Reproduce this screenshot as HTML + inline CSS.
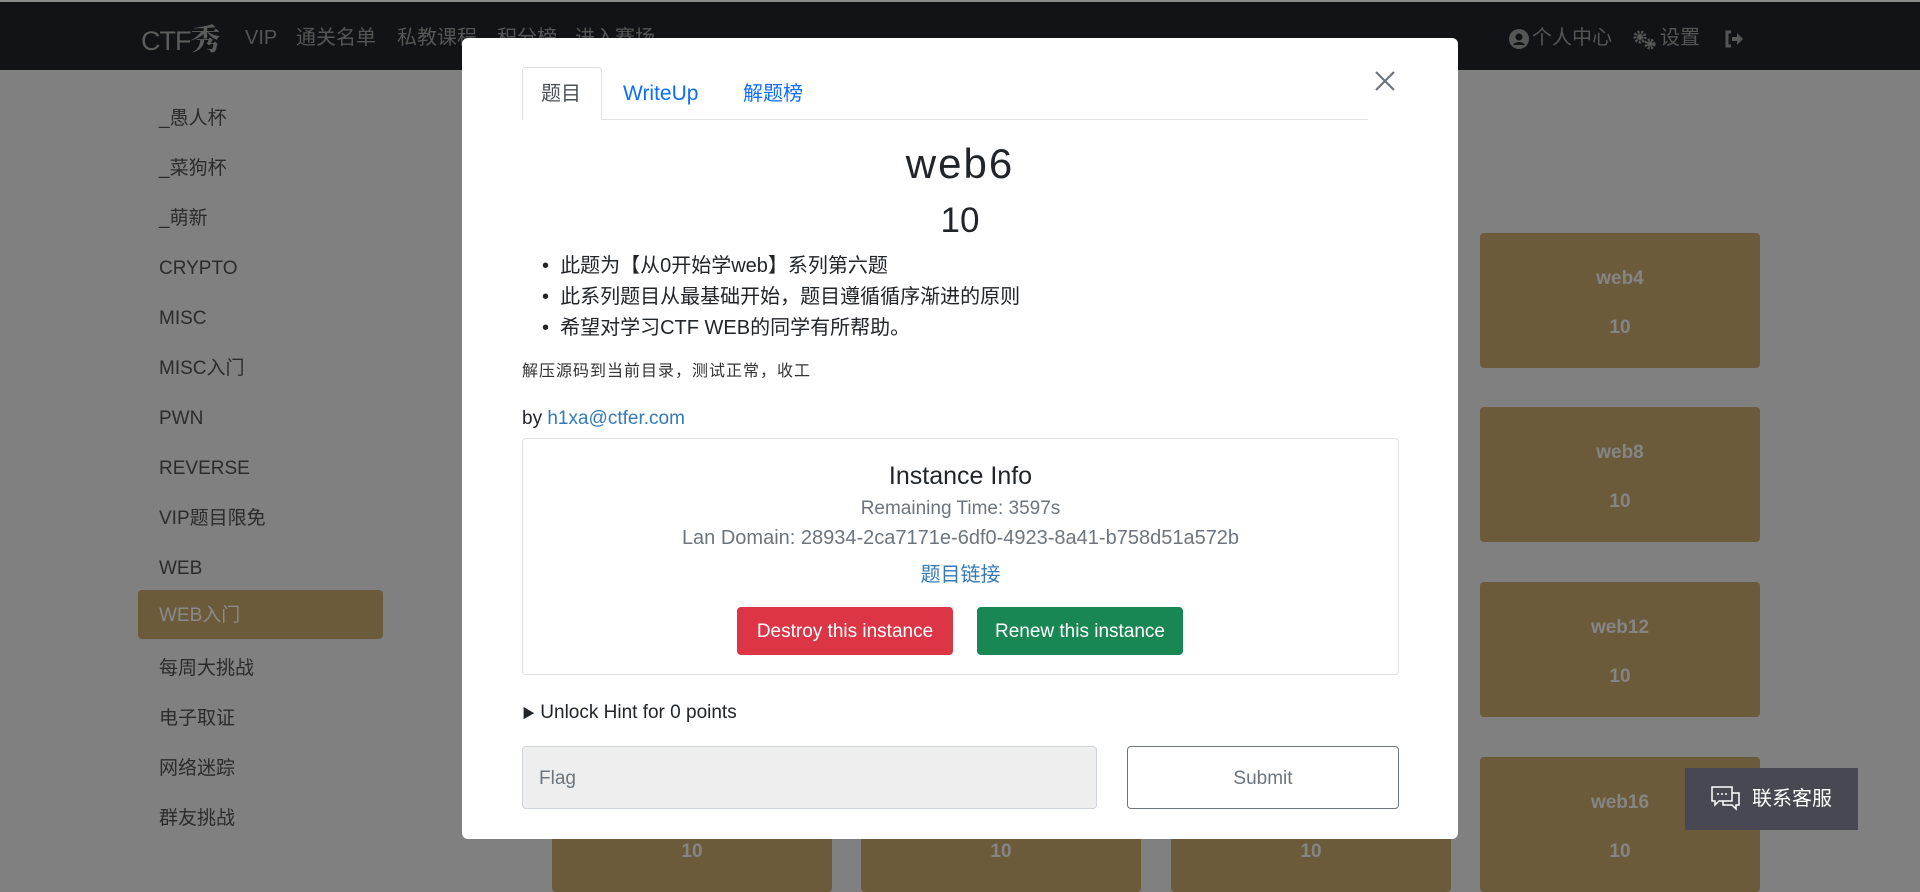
<!DOCTYPE html>
<html><head><meta charset="utf-8">
<style>
*{margin:0;padding:0;box-sizing:border-box}
body{width:1920px;height:892px;overflow:hidden;background:#808080;font-family:"Liberation Sans","Noto Sans CJK SC",sans-serif;position:relative;color:#212529;line-height:1.2}
.a{position:absolute;white-space:nowrap}
.nav{position:absolute;left:0;top:0;width:1920px;height:70px;background:#121316;border-top:2px solid #8a8a8a}
.nv{position:absolute;top:24px;font-size:20px;line-height:24px;color:#565656}
.sb{position:absolute;left:159px;font-size:19px;line-height:24px;color:#2b2b2b}
.tile{position:absolute;width:280px;height:135px;background:#6b5b3a;border-radius:4px;color:#858585;font-weight:bold;font-size:19px;line-height:24px;text-align:center}
.tile .n{position:absolute;top:34px;width:100%}
.tile .p{position:absolute;top:83px;width:100%}
.modal{position:absolute;left:462px;top:38px;width:996px;height:801px;background:#fff;border-radius:6px}
.c{text-align:center;width:100%;left:0}
</style></head><body>
<div class="nav">
 <div class="a" style="left:141px;top:19px;font-size:27px;line-height:32px;color:#5c5c5c;letter-spacing:-1px">CTF<span style="font-family:'Noto Serif CJK SC',serif;font-size:30px;font-weight:bold">秀</span></div>
 <div class="nv" style="left:245px">VIP</div>
 <div class="nv" style="left:296px">通关名单</div>
 <div class="nv" style="left:397px">私教课程</div>
 <div class="nv" style="left:497px">积分榜</div>
 <div class="nv" style="left:575px">进入赛场</div>
 <svg class="a" style="left:1509px;top:27px" width="20" height="20" viewBox="0 0 20 20"><circle cx="10" cy="10" r="10" fill="#565656"/><circle cx="10" cy="8" r="3.5" fill="#121316"/><path d="M4 16c2-4 10-4 12 0" fill="#121316"/></svg>
 <div class="nv" style="left:1532px">个人中心</div>
 <svg class="a" style="left:1633px;top:28px" width="24" height="20" viewBox="0 0 24 20"><circle cx="7" cy="7" r="5" fill="none" stroke="#565656" stroke-width="3" stroke-dasharray="2 1.5"/><circle cx="7" cy="7" r="3" fill="#565656"/><circle cx="17" cy="14" r="4" fill="none" stroke="#565656" stroke-width="3" stroke-dasharray="2 1.3"/><circle cx="17" cy="14" r="2.5" fill="#565656"/></svg>
 <div class="nv" style="left:1660px">设置</div>
 <svg class="a" style="left:1724px;top:28px" width="20" height="18" viewBox="0 0 20 18"><path d="M7 2H3v14h4" stroke="#565656" stroke-width="3" fill="none"/><path d="M8 7h5V3l6 6-6 6v-4H8z" fill="#565656"/></svg>
</div>
<div class="sb" style="top:107px">_愚人杯</div>
<div class="sb" style="top:157px">_菜狗杯</div>
<div class="sb" style="top:207px">_萌新</div>
<div class="sb" style="top:257px">CRYPTO</div>
<div class="sb" style="top:307px">MISC</div>
<div class="sb" style="top:357px">MISC入门</div>
<div class="sb" style="top:407px">PWN</div>
<div class="sb" style="top:457px">REVERSE</div>
<div class="sb" style="top:507px">VIP题目限免</div>
<div class="sb" style="top:557px">WEB</div>
<div class="a" style="left:138px;top:590px;width:245px;height:49px;background:#6b5b3a;border-radius:4px"></div>
<div class="sb" style="top:604px;color:#8a8a8a">WEB入门</div>
<div class="sb" style="top:657px">每周大挑战</div>
<div class="sb" style="top:707px">电子取证</div>
<div class="sb" style="top:757px">网络迷踪</div>
<div class="sb" style="top:807px">群友挑战</div>

<div class="tile" style="left:1480px;top:233px"><div class="n">web4</div><div class="p">10</div></div>
<div class="tile" style="left:1480px;top:407px"><div class="n">web8</div><div class="p">10</div></div>
<div class="tile" style="left:1480px;top:582px"><div class="n">web12</div><div class="p">10</div></div>
<div class="tile" style="left:1480px;top:757px"><div class="n">web16</div><div class="p">10</div></div>
<div class="tile" style="left:552px;top:757px"><div class="p">10</div></div>
<div class="tile" style="left:861px;top:757px"><div class="p">10</div></div>
<div class="tile" style="left:1171px;top:757px"><div class="p">10</div></div>

<div class="a" style="left:1685px;top:768px;width:173px;height:62px;background:#484853;color:#fff;font-size:20px;line-height:24px">
 <svg class="a" style="left:26px;top:18px" width="30" height="26" viewBox="0 0 30 26"><path d="M1 1h20v14H8l-4 4v-4H1z" fill="none" stroke="#fff" stroke-width="1.5"/><path d="M21 7h7v12h-3v4l-4-4h-9v-4" fill="none" stroke="#fff" stroke-width="1.5"/><circle cx="7" cy="8" r="1" fill="#fff"/><circle cx="11" cy="8" r="1" fill="#fff"/><circle cx="15" cy="8" r="1" fill="#fff"/></svg>
 <div class="a" style="left:67px;top:19px">联系客服</div>
</div>

<div class="modal">
 <div class="a" style="left:60px;top:81px;width:846px;border-top:1px solid #dee2e6"></div>
 <div class="a" style="left:60px;top:29px;width:80px;height:53px;background:#fff;border:1px solid #dee2e6;border-bottom:none;border-radius:4px 4px 0 0"></div>
 <div class="a" style="left:79px;top:43px;font-size:20px;line-height:26px;color:#495057">题目</div>
 <div class="a" style="left:161px;top:43px;font-size:21px;line-height:26px;color:#0d6efd">WriteUp</div>
 <div class="a" style="left:281px;top:43px;font-size:20px;line-height:26px;color:#0d6efd">解题榜</div>
 <svg class="a" style="left:912px;top:32px" width="22" height="22" viewBox="0 0 22 22"><path d="M2 2l18 18M20 2L2 20" stroke="#6c757d" stroke-width="2.2"/></svg>
 <div class="a c" style="top:101px;font-size:42px;line-height:50px;letter-spacing:2px">web6</div>
 <div class="a c" style="top:163px;font-size:35px;line-height:40px">10</div>
 <div class="a" style="left:80px;top:213px;font-size:20px;line-height:31px">
  <div>•&nbsp;&nbsp;此题为【从0开始学web】系列第六题</div>
  <div>•&nbsp;&nbsp;此系列题目从最基础开始，题目遵循循序渐进的原则</div>
  <div>•&nbsp;&nbsp;希望对学习CTF WEB的同学有所帮助。</div>
 </div>
 <div class="a" style="left:60px;top:324px;font-size:16px;line-height:20px;color:#333;letter-spacing:1px">解压源码到当前目录，测试正常，收工</div>
 <div class="a" style="left:60px;top:369px;font-size:19px;line-height:24px">by <span style="color:#337ab7">h1xa@ctfer.com</span></div>
 <div class="a" style="left:60px;top:400px;width:877px;height:237px;border:1px solid #dee2e6;border-radius:4px">
  <div class="a c" style="top:22px;font-size:25px;line-height:30px">Instance Info</div>
  <div class="a c" style="top:58px;font-size:19px;line-height:24px;color:#6c757d">Remaining Time: 3597s</div>
  <div class="a c" style="top:87px;font-size:20px;line-height:24px;color:#6c757d">Lan Domain: 28934-2ca7171e-6df0-4923-8a41-b758d51a572b</div>
  <div class="a c" style="top:123px;font-size:20px;line-height:26px;color:#337ab7">题目链接</div>
  <div class="a" style="left:214px;top:168px;width:216px;height:48px;background:#dc3545;border-radius:4px;color:#fff;font-size:19px;text-align:center;line-height:50px">Destroy this instance</div>
  <div class="a" style="left:454px;top:168px;width:206px;height:48px;background:#198754;border-radius:4px;color:#fff;font-size:19px;text-align:center;line-height:50px">Renew this instance</div>
 </div>
 <div class="a" style="left:60px;top:663px;font-size:19px;line-height:24px"><span style="font-size:13px">▶</span> Unlock Hint for 0 points</div>
 <div class="a" style="left:60px;top:708px;width:575px;height:63px;background:#eee;border:1px solid #ced4da;border-radius:4px;font-size:19px;line-height:63px;color:#6c757d;padding:0 16px">Flag</div>
 <div class="a" style="left:665px;top:708px;width:272px;height:63px;border:1px solid #6c757d;border-radius:4px;font-size:19px;color:#6c757d;text-align:center;line-height:63px">Submit</div>
</div>
</body></html>
